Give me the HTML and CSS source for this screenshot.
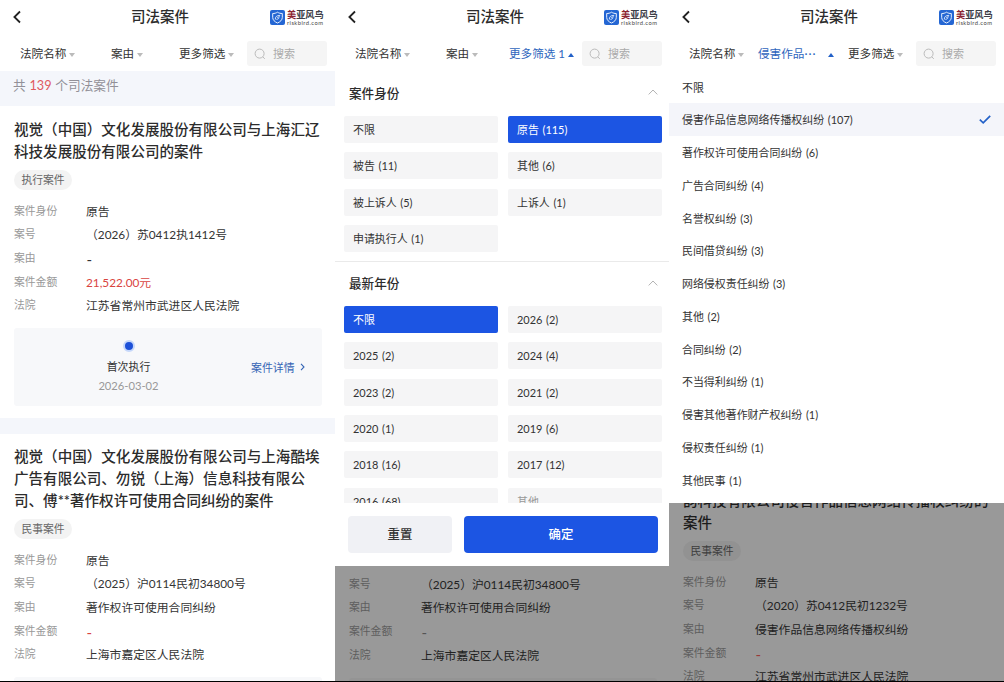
FILE: index.html
```
<!DOCTYPE html>
<html lang="zh-CN">
<head>
<meta charset="utf-8">
<title>司法案件</title>
<link rel="stylesheet" href="styles.css">
</head>
<body>
<svg class="defs" aria-hidden="true">
  <symbol id="back" viewBox="0 0 10 14"><path d="M8 1.5 2.4 7 8 12.5" fill="none" stroke="#222" stroke-width="1.8"/></symbol>
  <symbol id="shield" viewBox="0 0 15 15"><rect width="15" height="15" rx="2" fill="#2466d3"/><path d="M7.5 2.2C9 3.2 10.6 3.5 12.3 3.5V7.4C12.3 10 10.2 11.9 7.5 13 4.8 11.9 2.7 10 2.7 7.4V3.5C4.4 3.5 6 3.2 7.5 2.2Z" fill="none" stroke="#e8f1ff" stroke-width="1"/><path d="M5.3 9.5C5.2 6.8 6.6 5.5 9.8 5.4 9.5 6.6 8.8 7.3 7.3 7.6M6.4 9.4C7.8 9.2 8.7 8.7 9.2 7.6" fill="none" stroke="#e8f1ff" stroke-width=".9"/></symbol>
  <symbol id="search" viewBox="0 0 12 12"><circle cx="5.6" cy="5.6" r="4.5" fill="none" stroke="#bbb"/><path d="M8.8 8.8 10.8 10.9" stroke="#bbb"/></symbol>
  <symbol id="up" viewBox="0 0 10 6"><path d="M.7 5.4 5 1 9.3 5.4" fill="none" stroke="#aaa" stroke-width=".9"/></symbol>
  <symbol id="check" viewBox="0 0 12 9"><path d="M.8 4.700 4.200 7.800 11.200.800" fill="none" stroke="#2361c8" stroke-width="1.700"/></symbol>
  <symbol id="next" viewBox="0 0 5 8"><path d="M1 .8 4 4 1 7.200" fill="none" stroke="#3565b5" stroke-width="1.100"/></symbol>
</svg>
<main class="board">

  <section class="phone">
    <header class="top"><svg class="back"><use href="#back"/></svg><h1>司法案件</h1><div class="brand"><svg class="shield"><use href="#shield"/></svg><div class="brand-text"><b><i>美</i>亚风鸟</b><small>riskbird.com</small></div></div></header>
    <nav class="filters"><span class="f court">法院名称<i class="tri"></i></span><span class="f cause">案由<i class="tri"></i></span><span class="f more">更多筛选<i class="tri"></i></span><span class="search"><svg><use href="#search"/></svg>搜索</span></nav>
    <div class="count">共 <em>139</em> 个司法案件</div>
    <article class="case">
      <h2>视觉（中国）文化发展股份有限公司与上海汇辽科技发展股份有限公司的案件</h2>
      <span class="tag">执行案件</span>
      <dl>
        <dt>案件身份</dt><dd>原告</dd>
        <dt>案号</dt><dd>（2026）苏0412执1412号</dd>
        <dt>案由</dt><dd class="dash">-</dd>
        <dt>案件金额</dt><dd class="red">21,522.00元</dd>
        <dt>法院</dt><dd>江苏省常州市武进区人民法院</dd>
      </dl>
      <div class="stage">
        <div class="step"><i class="dot"></i><span>首次执行</span><time>2026-03-02</time></div>
        <a class="detail">案件详情<svg><use href="#next"/></svg></a>
      </div>
    </article>
    <div class="gap"></div>
    <article class="case second">
      <h2>视觉（中国）文化发展股份有限公司与上海酷埃广告有限公司、勿锐（上海）信息科技有限公司、傅**著作权许可使用合同纠纷的案件</h2>
      <span class="tag">民事案件</span>
      <dl>
        <dt>案件身份</dt><dd>原告</dd>
        <dt>案号</dt><dd>（2025）沪0114民初34800号</dd>
        <dt>案由</dt><dd>著作权许可使用合同纠纷</dd>
        <dt>案件金额</dt><dd class="red dash">-</dd>
        <dt>法院</dt><dd>上海市嘉定区人民法院</dd>
      </dl>
      <div class="stage"></div>
    </article>
  </section>

  <section class="phone mid">
    <header class="top"><svg class="back"><use href="#back"/></svg><h1>司法案件</h1><div class="brand"><svg class="shield"><use href="#shield"/></svg><div class="brand-text"><b><i>美</i>亚风鸟</b><small>riskbird.com</small></div></div></header>
    <nav class="filters"><span class="f court">法院名称<i class="tri"></i></span><span class="f cause">案由<i class="tri"></i></span><span class="f more active counted">更多筛选 1<i class="tri"></i></span><span class="search"><svg><use href="#search"/></svg>搜索</span></nav>
    <div class="panel">
      <div class="groups">
        <h3>案件身份<svg><use href="#up"/></svg></h3>
        <div class="options">
          <span>不限</span><span class="on">原告 (115)</span>
          <span>被告 (11)</span><span>其他 (6)</span>
          <span>被上诉人 (5)</span><span>上诉人 (1)</span>
          <span>申请执行人 (1)</span>
        </div>
        <h3 class="ruled">最新年份<svg><use href="#up"/></svg></h3>
        <div class="options">
          <span class="on">不限</span><span>2026 (2)</span>
          <span>2025 (2)</span><span>2024 (4)</span>
          <span>2023 (2)</span><span>2021 (2)</span>
          <span>2020 (1)</span><span>2019 (6)</span>
          <span>2018 (16)</span><span>2017 (12)</span>
          <span>2016 (68)</span><span class="off">其他</span>
        </div>
      </div>
      <div class="actions"><button class="reset">重置</button><button class="ok">确定</button></div>
    </div>
    <div class="dim from-number">
      <dl>
        <dt>案号</dt><dd>（2025）沪0114民初34800号</dd>
        <dt>案由</dt><dd>著作权许可使用合同纠纷</dd>
        <dt>案件金额</dt><dd class="plain dash">-</dd>
        <dt>法院</dt><dd>上海市嘉定区人民法院</dd>
      </dl>
      <div class="stage"></div>
    </div>
  </section>

  <section class="phone">
    <header class="top"><svg class="back"><use href="#back"/></svg><h1>司法案件</h1><div class="brand"><svg class="shield"><use href="#shield"/></svg><div class="brand-text"><b><i>美</i>亚风鸟</b><small>riskbird.com</small></div></div></header>
    <nav class="filters"><span class="f court">法院名称<i class="tri"></i></span><span class="f cause active wide">侵害作品<span class="dots">···</span><i class="tri"></i></span><span class="f more">更多筛选<i class="tri"></i></span><span class="search"><svg><use href="#search"/></svg>搜索</span></nav>
    <ul class="causes">
      <li>不限</li>
      <li class="picked">侵害作品信息网络传播权纠纷 (107)<svg><use href="#check"/></svg></li>
      <li>著作权许可使用合同纠纷 (6)</li>
      <li>广告合同纠纷 (4)</li>
      <li>名誉权纠纷 (3)</li>
      <li>民间借贷纠纷 (3)</li>
      <li>网络侵权责任纠纷 (3)</li>
      <li>其他 (2)</li>
      <li>合同纠纷 (2)</li>
      <li>不当得利纠纷 (1)</li>
      <li>侵害其他著作财产权纠纷 (1)</li>
      <li>侵权责任纠纷 (1)</li>
      <li>其他民事 (1)</li>
    </ul>
    <div class="dim from-title">
      <h2>韵科技有限公司侵害作品信息网络传播权纠纷的案件</h2>
      <span class="tag">民事案件</span>
      <dl>
        <dt>案件身份</dt><dd>原告</dd>
        <dt>案号</dt><dd>（2020）苏0412民初1232号</dd>
        <dt>案由</dt><dd>侵害作品信息网络传播权纠纷</dd>
        <dt>案件金额</dt><dd class="red dash">-</dd>
        <dt>法院</dt><dd>江苏省常州市武进区人民法院</dd>
      </dl>
    </div>
  </section>

</main>
</body>
</html>
```

FILE: styles.css
```
* { box-sizing: border-box; margin: 0; padding: 0; }
body { width: 1004px; height: 682px; overflow: hidden; background: #fff; font-family: Lato, "Noto Sans CJK SC", sans-serif; color: #333; }
i, em { font-style: normal; }
svg { display: block; }
.defs { position: absolute; width: 0; height: 0; }

.board { display: grid; grid-template-columns: 335px 334px 335px; height: 682px; border-bottom: 1px solid #000; }
.phone { display: flex; flex-direction: column; height: 681px; overflow: hidden; background: #fff; }
.phone > * { flex-shrink: 0; }

.top { display: grid; grid-template-columns: 131px 1fr auto; align-items: center; height: 35px; padding: 0 11px 1px 0; }
.back { width: 10px; height: 14px; margin-left: 12px; }
.top h1 { font-size: 14.5px; font-weight: 500; line-height: 20px; color: #2c2c2c; }
.brand { display: flex; align-items: center; gap: 2px; width: 54px; }
.shield { width: 15px; height: 15px; flex: none; }
.brand-text { display: flex; flex-direction: column; width: 37px; white-space: nowrap; }
.brand b { font-size: 9.2px; line-height: 10px; font-weight: 700; color: #3d4048; }
.brand b i { color: #8d2430; }
.brand small { font-size: 5.8px; line-height: 5px; letter-spacing: .45px; color: #444; }

.filters { display: grid; grid-template-columns: 20px 91px 68px 68px 80px; height: 36px; padding-top: 1px; align-items: center; font-size: 11.6px; line-height: 16px; }
.f { display: flex; align-items: center; white-space: nowrap; color: #333; }
.court { grid-column: 2; }
.tri { margin: 2px 0 0 3px; border: 3px solid transparent; border-top: 4px solid #bbb; border-bottom: 0; }
.active { color: #2f66bd; }
.active .tri { border-top: 0; border-bottom: 4px solid #2361c8; }
.counted { margin-left: -5px; }
.wide { margin-left: -22px; }
.dots { letter-spacing: 1px; }
.wide .tri { margin-left: 12px; }
.search { display: flex; align-items: center; gap: 7px; height: 25px; padding-left: 7px; border-radius: 3px; background: #f5f5f5; color: #aaa; font-size: 11px; }
.search svg { width: 12px; height: 12px; }

.count { height: 35px; padding: 5px 13px; background: #f4f6fb; color: #929098; font-size: 12.7px; line-height: 18px; word-spacing: .5px; }
.count em { color: #e05a5f; }

.case { height: 312px; padding: 13px 13px 0 14px; }
h2 { width: 310px; font-size: 14.55px; font-weight: 500; line-height: 22px; color: #2c2c2c; word-break: break-all; }
.tag { display: block; width: 58px; height: 20px; margin-top: 7px; border-radius: 10px; background: #f3f3f3; color: #666; font-size: 10.8px; line-height: 20px; text-align: center; }
dl { display: grid; grid-template-columns: 72px 1fr; grid-auto-rows: 23.65px; align-items: center; line-height: 20px; }
.tag + dl { margin-top: 9px; }
dt { color: #999; font-size: 10.8px; }
dd { padding-top: 2px; color: #333; font-size: 11.8px; line-height: 20px; }
.dash { padding-left: .5px; font-size: 15px; }
.red { color: #d9443f; }
.stage { display: grid; grid-template-columns: 229px 1fr; align-items: center; height: 78px; margin-top: 11px; border-radius: 3px; background: #f7f8fa; }
.step { display: flex; flex-direction: column; align-items: center; padding-top: 1px; font-size: 10.9px; line-height: 18px; }
.dot { width: 12px; height: 12px; margin-bottom: 6px; border: 2px solid #c5d7fa; border-radius: 50%; background: #1c50d8; }
.step time { padding-top: 1px; color: #999; font-size: 11.2px; }
.detail { display: flex; align-items: center; gap: 5px; padding-left: 8px; color: #3565b5; font-size: 10.9px; }
.detail svg { width: 5px; height: 8px; }
.gap { height: 16px; background: #f4f6fb; }
.second { padding-top: 12px; }

.panel { display: flex; flex-direction: column; height: 495px; background: #fff; }
.groups { height: 432px; overflow: hidden; }
h3 { display: flex; align-items: center; justify-content: space-between; height: 45px; padding: 0 11px 3px 14px; font-size: 12.6px; font-weight: 500; color: #2c2c2c; }
h3 svg { width: 10px; height: 6px; }
.ruled { height: 45px; margin-top: 9px; border-top: 1px solid #eaeaea; }
.options { display: grid; grid-template-columns: 154px 154px; grid-auto-rows: 27px; gap: 9.35px 10px; padding-left: 9px; }
.options span { padding-left: 9px; border-radius: 2px; background: #f5f5f6; font-size: 10.95px; line-height: 27px; word-spacing: .8px; }
.options .on { background: #1c55e3; color: #fff; }
.options .off { color: #999; }
.actions { display: grid; grid-template-columns: 104px 194px; gap: 12px; padding: 13px 0 0 13px; }
.actions button { height: 37px; border: 0; border-radius: 4px; background: #f0f1f5; color: #333; font: 500 12.4px/37px Lato, "Noto Sans CJK SC", sans-serif; }
.actions .ok { background: #1c55e3; color: #fff; }

.dim { height: 116px; padding-left: 14px; overflow: hidden; background: #999; }
.dim dt { color: #5e5e5e; }
.dim dd { color: #222; }
.dim .plain { color: #555; }
.dim .red { color: #9a3b38; }
.dim .stage { width: 308px; background: #949494; }
.from-number { padding-top: 6px; }
.from-title { height: 178px; }
.from-title h2 { margin-top: -13px; color: #1c1c1c; }
.from-title .tag { background: #929292; color: #3d3d3d; }

.causes { height: 432px; list-style: none; font-size: 10.95px; }
.causes li { display: flex; align-items: center; justify-content: space-between; height: 32.75px; padding: 0 13px 0 13px; word-spacing: .8px; }
.causes li:first-child { height: 32px; }
.causes .picked { background: #f4f5fa; }
.causes svg { width: 12px; height: 9px; }
```
